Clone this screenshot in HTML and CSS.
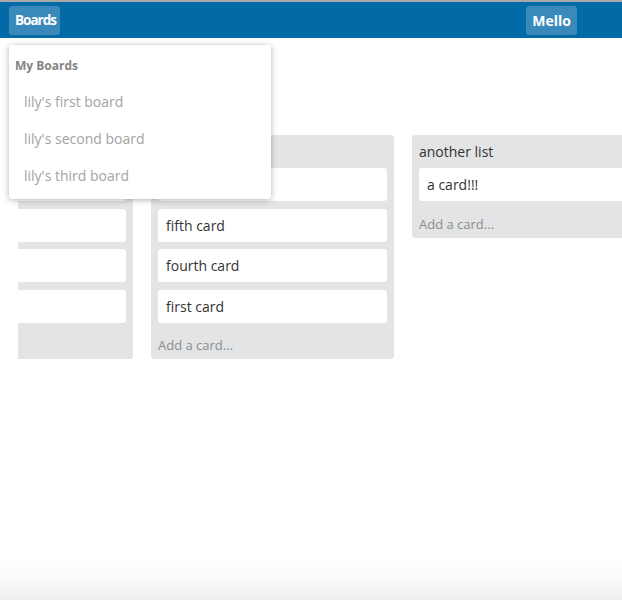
FILE: index.html
```html
<!DOCTYPE html>
<html>
<head>
<meta charset="utf-8">
<link rel="stylesheet" href="styles.css">
</head>
<body>
<header class="topbar">
  <div class="menu-wrap">
    <button class="nav-btn boards-btn">Boards</button>
    <div class="dropdown">
      <div class="dropdown-title">My Boards</div>
      <div class="dropdown-item">lily's first board</div>
      <div class="dropdown-item">lily's second board</div>
      <div class="dropdown-item">lily's third board</div>
    </div>
  </div>
  <button class="nav-btn brand">Mello</button>
</header>
<main class="board">
  <div class="lists">
    <section class="list">
      <h2 class="list-title">a list</h2>
      <div class="card">card</div>
      <div class="card">card</div>
      <div class="card">card</div>
      <div class="card">card</div>
      <div class="add-card">Add a card...</div>
    </section>
    <section class="list">
      <h2 class="list-title">second list</h2>
      <div class="card">sixth card</div>
      <div class="card">fifth card</div>
      <div class="card">fourth card</div>
      <div class="card">first card</div>
      <div class="add-card">Add a card...</div>
    </section>
    <section class="list">
      <h2 class="list-title">another list</h2>
      <div class="card">a card!!!</div>
      <div class="add-card">Add a card...</div>
    </section>
  </div>
</main>
</body>
</html>
```
FILE: styles.css
```css
html {
  height: 100%;
  background: linear-gradient(to bottom, #ffffff 0, #ffffff calc(100% - 45px), #fafafa calc(100% - 20px), #ededed 100%);
}
body {
  margin: 0;
  height: 100%;
  font-family: "Open Sans", "Noto Sans", sans-serif;
  overflow: hidden;
}
.topbar {
  display: flex;
  align-items: center;
  height: 36px;
  border-top: 2px solid #a9a9a9;
  background: #026aa7;
  padding: 0 45px 0 9px;
  position: relative;
  z-index: 2;
}
.menu-wrap {
  position: relative;
}
.nav-btn {
  display: block;
  font-family: "Open Sans", "Noto Sans", sans-serif;
  font-weight: 700;
  font-size: 14px;
  line-height: 19px;
  color: #fff;
  background: rgba(255, 255, 255, 0.22);
  border: 0;
  border-radius: 3px;
  padding: 5px 6px;
  height: 29px;
  margin-top: 1px;
}
.boards-btn {
  font-size: 13.5px;
  letter-spacing: -1px;
  padding: 5px 4px 5px 6px;
}
.brand {
  margin-left: auto;
}
.dropdown {
  position: absolute;
  left: 0;
  top: 40px;
  width: 262px;
  height: 154px;
  box-sizing: border-box;
  background: #fff;
  border-radius: 3px;
  box-shadow: 0 1px 6px rgba(0, 0, 0, 0.3);
  padding: 13px 0 0;
}
.dropdown-title {
  font-size: 12px;
  font-weight: 700;
  line-height: 16px;
  color: #838383;
  padding: 0 6px 9.5px;
}
.dropdown-item {
  font-size: 14px;
  line-height: 20px;
  padding: 8.5px 15px;
  color: #a3a3a3;
}
.board {
  padding-top: 97px;
  margin-left: 18px;
  overflow: hidden;
}
.lists {
  display: flex;
  align-items: flex-start;
  gap: 18px;
  margin-left: -128px;
}
.list {
  flex: 0 0 243px;
  width: 243px;
  box-sizing: border-box;
  background: #e2e4e6;
  border-radius: 3px;
  padding: 0 7px;
}
.list-title {
  margin: 0;
  font-size: 14px;
  font-weight: 400;
  line-height: 17px;
  padding: 8px 0;
  color: #333;
}
.card {
  background: #fff;
  border-radius: 3px;
  height: 33px;
  box-sizing: border-box;
  padding: 7px 8px;
  font-size: 14px;
  line-height: 19px;
  color: #333;
  margin-bottom: 7.5px;
}
.add-card {
  font-size: 13px;
  line-height: 17px;
  color: #8c8c8c;
  padding: 7px 0 5px;
}
```
